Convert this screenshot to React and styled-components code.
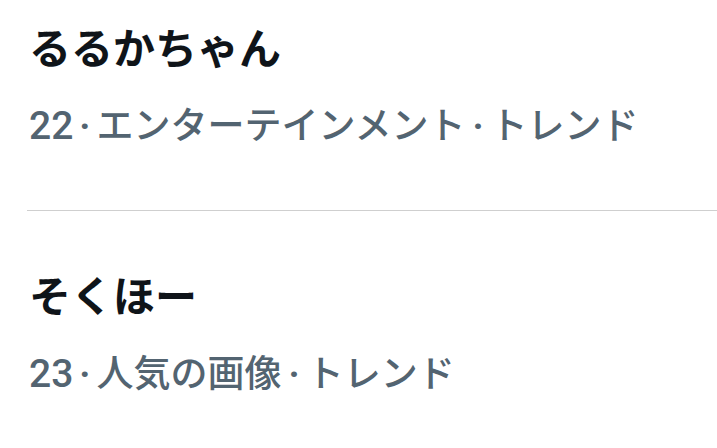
import styled, { createGlobalStyle } from 'styled-components';

const GlobalStyle = createGlobalStyle`
  html, body {
    margin: 0;
    padding: 0;
    background: #ffffff;
    overflow: hidden;
  }
  body {
    font-family: Roboto, "Noto Sans CJK JP", sans-serif;
  }
`;

const trends = [
  { title: 'るるかちゃん', rank: 22, category: 'エンターテインメント' },
  { title: 'そくほー', rank: 23, category: '人気の画像' },
];

const List = styled.div`
  width: 717px;
  height: 448px;
  overflow: hidden;
`;

const Scroller = styled.div`
  margin-top: -37px;
`;

const Item = styled.div`
  margin-left: 27px;
  padding: 61px 0 59px 2px;
  border-bottom: 1px solid #cfcfcf;
  display: flex;
  flex-direction: column;
  gap: 26px;
`;

const Title = styled.div`
  font-size: 42px;
  line-height: 52px;
  font-weight: 700;
  color: #0f1419;
`;

const Meta = styled.div`
  font-size: 37px;
  line-height: 48px;
  font-weight: 500;
  color: #536471;
  white-space: nowrap;
`;

const Rank = styled.span`
  font-size: 39px;
`;

const Dot = styled.span`
  margin: 0 ${(p) => (p.$wide ? '7px' : '6px')};
  font-weight: 700;
`;

export default function App() {
  return (
    <List>
      <GlobalStyle />
      <Scroller>
        {trends.map((t) => (
          <Item key={t.rank}>
            <Title>{t.title}</Title>
            <Meta>
              <Rank>{t.rank}</Rank>
              <Dot>·</Dot>
              {t.category}
              <Dot $wide>·</Dot>
              トレンド
            </Meta>
          </Item>
        ))}
      </Scroller>
    </List>
  );
}
